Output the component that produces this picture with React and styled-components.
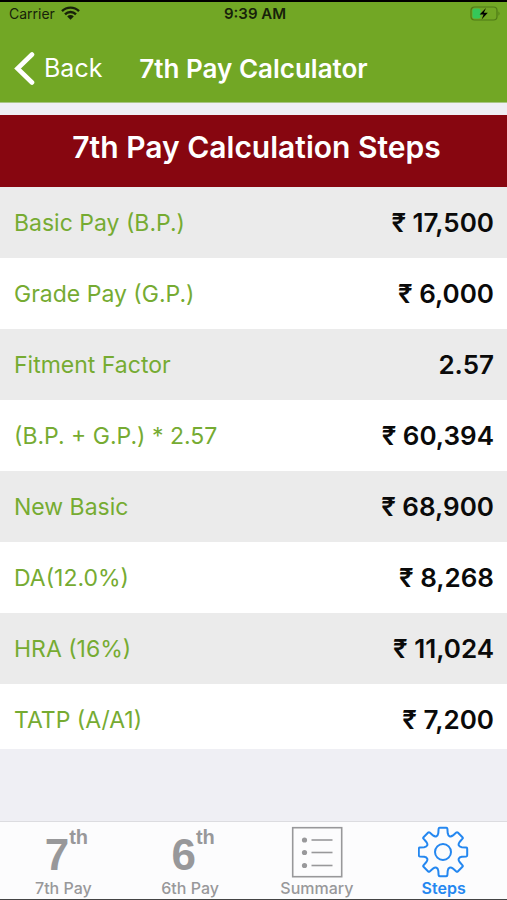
import React from "react";
import styled, { createGlobalStyle } from "styled-components";

const GlobalStyle = createGlobalStyle`
  * {
    box-sizing: border-box;
  }
  body {
    margin: 0;
    background: #efeff4;
    font-family: Inter, "Liberation Sans", sans-serif;
  }
`;

const Screen = styled.div`
  display: flex;
  flex-direction: column;
  min-height: 100vh;
  border-top: 2px solid #000;
  border-bottom: 1px solid #444;
`;

const Header = styled.header`
  background: #72a725;
  border-bottom: 1px solid #a9c684;
`;

const StatusBar = styled.div`
  display: grid;
  grid-template-columns: 1fr auto 1fr;
  align-items: center;
  height: 22px;
  padding: 0 6px 0 9px;
  font-size: 14px;
  color: #17220a;
`;

const Carrier = styled.div`
  display: flex;
  align-items: center;
  gap: 6px;
`;

const Time = styled.div`
  font-size: 15px;
  font-weight: 600;
`;

const BatteryIcon = styled.svg`
  justify-self: end;
`;

const NavBar = styled.nav`
  display: grid;
  grid-template-columns: 1fr auto 1fr;
  align-items: center;
  height: 78px;
  padding: 10px 14px 0;
  color: #fff;
`;

const BackButton = styled.button`
  display: flex;
  align-items: center;
  gap: 9px;
  justify-self: start;
  padding: 0;
  border: none;
  background: none;
  color: inherit;
  font: inherit;
  font-size: 25px;
  cursor: pointer;
`;

const Title = styled.h1`
  margin: 0;
  font-size: 26px;
  font-weight: 600;
`;

const Main = styled.main`
  flex: 1;
  padding-top: 12px;
`;

const StepsTable = styled.table`
  width: 100%;
  border-collapse: collapse;
  background: #fff;
`;

const Caption = styled.caption`
  height: 72px;
  padding: 14px 0 0 6px;
  background: #870610;
  color: #fff;
  font-size: 30px;
  font-weight: 600;
  line-height: 36px;
`;

const Label = styled.th`
  padding: 0 0 0 14px;
  color: #76ab32;
  font-size: 23px;
  font-weight: 400;
  text-align: left;
`;

const Amount = styled.td`
  padding: 0 13px 0 0;
  color: #0a0a0a;
  font-size: 26px;
  font-weight: 600;
  text-align: right;
`;

const Row = styled.tr`
  height: 71px;

  &:nth-child(odd) {
    background: #ebebeb;
  }

  &:last-child {
    height: 65px;
  }

  &:last-child ${Label}, &:last-child ${Amount} {
    padding-top: 6px;
  }
`;

const TabBar = styled.nav`
  display: grid;
  grid-template-columns: repeat(4, 1fr);
  height: 78px;
  border-top: 1px solid #dcdce0;
  background: #fcfcfd;
`;

const Tab = styled.a`
  display: flex;
  flex-direction: column;
  align-items: center;
  padding-top: 4px;
  color: ${({ $active }) => ($active ? "#2487f0" : "#98989a")};
  font-size: 16px;
  font-weight: ${({ $active }) => ($active ? 600 : 500)};
  line-height: 20px;
  text-decoration: none;
`;

const TabIcon = styled.span`
  display: flex;
  align-items: center;
  justify-content: center;
  height: 52px;
`;

const Ordinal = styled.span`
  display: flex;
  align-items: flex-start;
  padding: 6px 0 0 6px;
  font-family: "Liberation Sans", Arial, sans-serif;
  font-size: 44px;
  font-weight: 700;
  line-height: 60px;
`;

const Suffix = styled.sup`
  font-size: 20px;
  line-height: 24px;
`;

const steps = [
  { label: "Basic Pay (B.P.)", amount: "₹ 17,500" },
  { label: "Grade Pay (G.P.)", amount: "₹ 6,000" },
  { label: "Fitment Factor", amount: "2.57" },
  { label: "(B.P. + G.P.) * 2.57", amount: "₹ 60,394" },
  { label: "New Basic", amount: "₹ 68,900" },
  { label: "DA(12.0%)", amount: "₹ 8,268" },
  { label: "HRA (16%)", amount: "₹ 11,024" },
  { label: "TATP (A/A1)", amount: "₹ 7,200" },
];

const WifiIcon = () => (
  <svg width="19" height="14" viewBox="0 0 19 14" aria-hidden="true">
    <g fill="none" stroke="currentColor" strokeWidth="2.4">
      <path d="M1 5.2a12 12 0 0 1 17 0" />
      <path d="M4 8.3a7.8 7.8 0 0 1 11 0" />
    </g>
    <path d="M6.2 10.4a4.7 4.7 0 0 1 6.6 0L9.5 13.8z" fill="currentColor" />
  </svg>
);

const Battery = () => (
  <BatteryIcon width="31" height="15" viewBox="0 0 31 15" aria-hidden="true">
    <rect x="1" y="1" width="26" height="13" rx="3.5" fill="none" stroke="#4f7a17" strokeWidth="1.2" />
    <path d="M28.5 5.2q2 2.3 0 4.6z" fill="#4f7a17" />
    <rect x="2.5" y="2.5" width="8" height="10" rx="2" fill="#35c759" />
    <path d="M16 2l-6.4 6.4h4l-2 5 6.2-6.6h-4z" fill="#000" />
  </BatteryIcon>
);

const BackIcon = () => (
  <svg width="21" height="33" viewBox="0 0 21 33" aria-hidden="true">
    <path
      d="M18 2.5L3.5 16.5L18 30.5"
      fill="none"
      stroke="#fff"
      strokeWidth="4.6"
      strokeLinecap="round"
    />
  </svg>
);

const OrdinalIcon = ({ digit }) => (
  <Ordinal aria-hidden="true">
    {digit}
    <Suffix>th</Suffix>
  </Ordinal>
);

const SummaryIcon = () => (
  <svg width="52" height="52" viewBox="0 0 52 52" aria-hidden="true">
    <rect x="1.7" y="1.7" width="49" height="49" fill="none" stroke="currentColor" strokeWidth="1.6" />
    {[14, 26.5, 39.5].map((y) => (
      <g key={y}>
        <circle cx="13.5" cy={y} r="2.6" fill="currentColor" />
        <path d={`M20.5 ${y}h21`} stroke="currentColor" strokeWidth="1.6" />
      </g>
    ))}
  </svg>
);

// rotates a point of the top tooth to the tooth with the given index
const toothPoint = (x, y, index) => {
  const angle = (index * Math.PI) / 4;
  const px = x * Math.cos(angle) - y * Math.sin(angle);
  const py = x * Math.sin(angle) + y * Math.cos(angle);
  return `${px.toFixed(2)} ${py.toFixed(2)}`;
};

const gearPath = [0, 1, 2, 3, 4, 5, 6, 7]
  .map((i) =>
    [
      `${i === 0 ? "M" : "L"}${toothPoint(-4.7, -18.8, i)}`,
      `L${toothPoint(-4.4, -23.2, i)}`,
      `Q${toothPoint(-4.3, -24.2, i)} ${toothPoint(-3.3, -24.2, i)}`,
      `L${toothPoint(3.3, -24.2, i)}`,
      `Q${toothPoint(4.3, -24.2, i)} ${toothPoint(4.4, -23.2, i)}`,
      `L${toothPoint(4.7, -18.8, i)}`,
      `C${toothPoint(5.2, -15.6, i)} ${toothPoint(-5.2, -15.6, i + 1)} ${toothPoint(-4.7, -18.8, i + 1)}`,
    ].join("")
  )
  .join("");

const GearIcon = () => (
  <svg width="52" height="52" viewBox="-25 -26 52 52" aria-hidden="true">
    <g fill="none" stroke="currentColor" strokeWidth="2" strokeLinejoin="round">
      <path d={`${gearPath}z`} />
      <circle r="8" />
    </g>
  </svg>
);

const tabs = [
  { name: "7th Pay", icon: <OrdinalIcon digit="7" /> },
  { name: "6th Pay", icon: <OrdinalIcon digit="6" /> },
  { name: "Summary", icon: <SummaryIcon /> },
  { name: "Steps", icon: <GearIcon />, active: true },
];

const App = () => {
  return (
    <Screen>
      <GlobalStyle />
      <Header>
        <StatusBar>
          <Carrier>
            Carrier <WifiIcon />
          </Carrier>
          <Time>9:39 AM</Time>
          <Battery />
        </StatusBar>
        <NavBar>
          <BackButton type="button">
            <BackIcon />
            Back
          </BackButton>
          <Title>7th Pay Calculator</Title>
        </NavBar>
      </Header>
      <Main>
        <StepsTable>
          <Caption>7th Pay Calculation Steps</Caption>
          <tbody>
            {steps.map((step) => (
              <Row key={step.label}>
                <Label scope="row">{step.label}</Label>
                <Amount>{step.amount}</Amount>
              </Row>
            ))}
          </tbody>
        </StepsTable>
      </Main>
      <TabBar>
        {tabs.map((tab) => (
          <Tab key={tab.name} href="#" $active={tab.active}>
            <TabIcon>{tab.icon}</TabIcon>
            {tab.name}
          </Tab>
        ))}
      </TabBar>
    </Screen>
  );
};

export default App;
